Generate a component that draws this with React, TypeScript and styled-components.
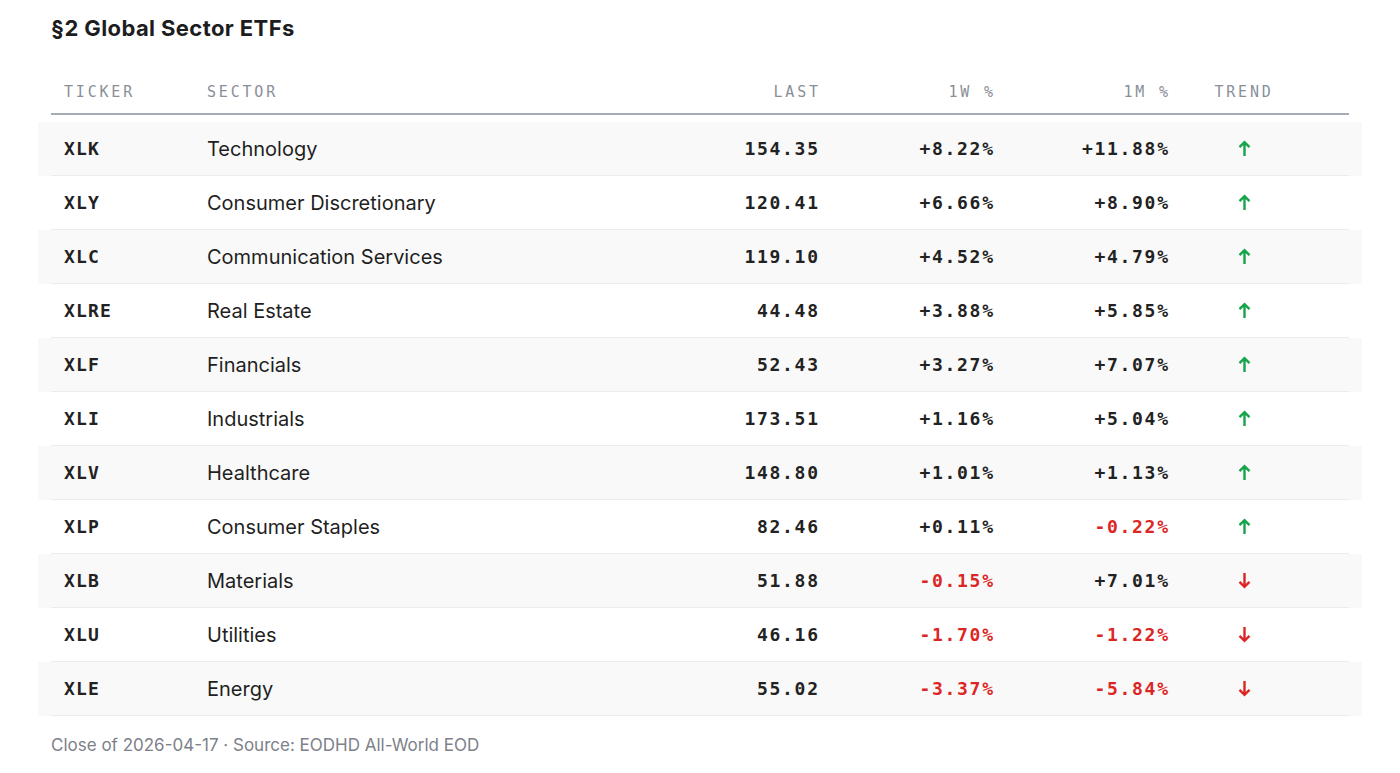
import React from "react";
import styled, { createGlobalStyle } from "styled-components";

type Etf = {
  ticker: string;
  sector: string;
  last: string;
  week: string;
  month: string;
  up: boolean;
};

const rows: Etf[] = [
  { ticker: "XLK", sector: "Technology", last: "154.35", week: "+8.22%", month: "+11.88%", up: true },
  { ticker: "XLY", sector: "Consumer Discretionary", last: "120.41", week: "+6.66%", month: "+8.90%", up: true },
  { ticker: "XLC", sector: "Communication Services", last: "119.10", week: "+4.52%", month: "+4.79%", up: true },
  { ticker: "XLRE", sector: "Real Estate", last: "44.48", week: "+3.88%", month: "+5.85%", up: true },
  { ticker: "XLF", sector: "Financials", last: "52.43", week: "+3.27%", month: "+7.07%", up: true },
  { ticker: "XLI", sector: "Industrials", last: "173.51", week: "+1.16%", month: "+5.04%", up: true },
  { ticker: "XLV", sector: "Healthcare", last: "148.80", week: "+1.01%", month: "+1.13%", up: true },
  { ticker: "XLP", sector: "Consumer Staples", last: "82.46", week: "+0.11%", month: "-0.22%", up: true },
  { ticker: "XLB", sector: "Materials", last: "51.88", week: "-0.15%", month: "+7.01%", up: false },
  { ticker: "XLU", sector: "Utilities", last: "46.16", week: "-1.70%", month: "-1.22%", up: false },
  { ticker: "XLE", sector: "Energy", last: "55.02", week: "-3.37%", month: "-5.84%", up: false },
];

const GlobalStyle = createGlobalStyle`
  * { box-sizing: border-box; }
  body {
    margin: 0;
    background: #ffffff;
    font-family: "Inter", "Noto Sans", sans-serif;
    color: #1c1c1c;
  }
`;

const Arrow = ({ up }: { up: boolean }) => (
  <svg width="13" height="17" viewBox="0 0 13 17" fill="none">
    {up ? (
      <path d="M6.5 16V2.5M1.5 7.2L6.5 2.2l5 5" stroke="#16a34a" strokeWidth="2.4" />
    ) : (
      <path d="M6.5 1v13.5M1.5 9.8l5 5 5-5" stroke="#dc2626" strokeWidth="2.4" />
    )}
  </svg>
);

const App = () => {
  return (
    <>
      <GlobalStyle />
      <Page>
        <Title>§2 Global Sector ETFs</Title>
        <Table>
          <HeadRow>
            <HeadCell>TICKER</HeadCell>
            <HeadCell>SECTOR</HeadCell>
            <HeadCell $right>LAST</HeadCell>
            <HeadCell $right>1W %</HeadCell>
            <HeadCell $right>1M %</HeadCell>
            <HeadCell $trend>TREND</HeadCell>
          </HeadRow>
          <Body>
            {rows.map((r, i) => (
              <Row key={r.ticker} $striped={i % 2 === 0}>
                <Ticker>{r.ticker}</Ticker>
                <Sector>{r.sector}</Sector>
                <Num>{r.last}</Num>
                <Num $neg={r.week.startsWith("-")}>{r.week}</Num>
                <Num $neg={r.month.startsWith("-")}>{r.month}</Num>
                <Trend>
                  <Arrow up={r.up} />
                </Trend>
              </Row>
            ))}
          </Body>
        </Table>
        <Footer>Close of 2026-04-17 · Source: EODHD All-World EOD</Footer>
      </Page>
    </>
  );
};

export default App;

const Page = styled.div`
  padding: 14px 51px 0 51px;
  width: 1400px;
`;

const Title = styled.h2`
  margin: 0;
  font-size: 22px;
  line-height: 28px;
  font-weight: 700;
  color: #1d1d1f;
  letter-spacing: 0.4px;
`;

const Table = styled.div`
  margin-top: 28px;
  width: 1298px;
`;

const columns = "143px 462px 175px 175px 175px 168px";

const HeadRow = styled.div`
  display: grid;
  grid-template-columns: ${columns};
  align-items: center;
  height: 45px;
  border-bottom: 2px solid #a6acb7;
`;

const HeadCell = styled.div<{ $right?: boolean; $trend?: boolean }>`
  font-family: "DejaVu Sans Mono", monospace;
  font-size: 15px;
  letter-spacing: 2.8px;
  color: #8a8f98;
  padding: ${(p) => (p.$trend ? "0 42px 0 0" : "0 13px")};
  text-align: ${(p) => (p.$right ? "right" : p.$trend ? "center" : "left")};
  margin-right: ${(p) => (p.$right ? "-2.8px" : "0")};
`;

const Body = styled.div`
  padding-top: 7px;
`;

const Row = styled.div<{ $striped: boolean }>`
  display: grid;
  grid-template-columns: ${columns};
  align-items: center;
  height: 54px;
  border-bottom: 1px solid #ececec;
  background: ${(p) => (p.$striped ? "#f9f9f9" : "transparent")};
  box-shadow: ${(p) =>
    p.$striped ? "-13px 0 0 #f9f9f9, 13px 0 0 #f9f9f9" : "none"};
`;

const Ticker = styled.div`
  font-family: "DejaVu Sans Mono", monospace;
  font-size: 18px;
  font-weight: 700;
  letter-spacing: 1.2px;
  color: #222222;
  padding: 0 13px;
`;

const Sector = styled.div`
  font-size: 20px;
  color: #1f1f1f;
  padding: 0 13px;
`;

const Num = styled.div<{ $neg?: boolean }>`
  font-family: "DejaVu Sans Mono", monospace;
  font-size: 18px;
  font-weight: 700;
  letter-spacing: 1.7px;
  color: ${(p) => (p.$neg ? "#dc2626" : "#222222")};
  text-align: right;
  padding: 0 13px;
  margin-right: -1.7px;
`;

const Trend = styled.div`
  display: flex;
  justify-content: center;
  align-items: center;
  padding-right: 42px;
`;

const Footer = styled.div`
  margin-top: 19px;
  font-size: 17px;
  color: #7d8189;
`;
